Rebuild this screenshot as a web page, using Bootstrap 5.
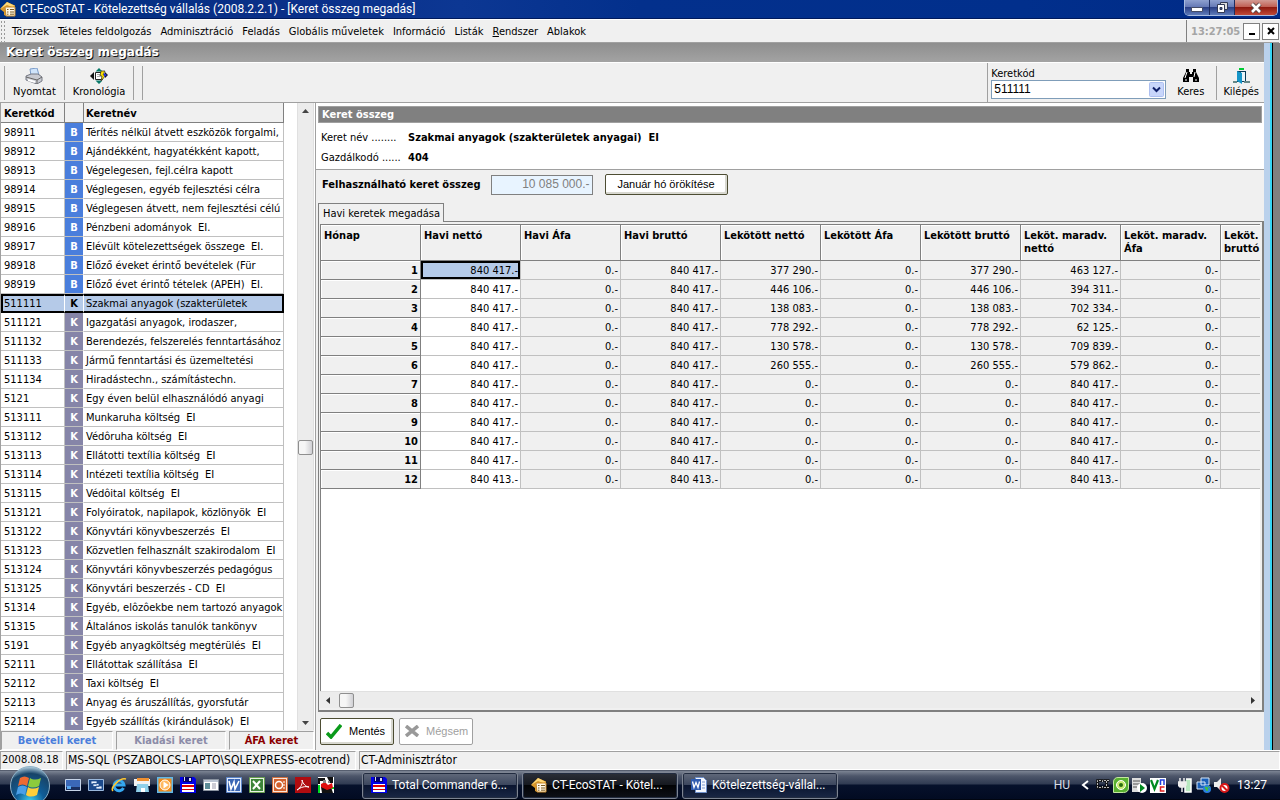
<!DOCTYPE html>
<html lang="hu">
<head>
<meta charset="utf-8">
<meta name="viewport" content="width=device-width, initial-scale=1">
<title>CT-EcoSTAT - Kötelezettség vállalás</title>
<link rel="stylesheet" href="https://cdn.jsdelivr.net/npm/bootstrap@5.3.0/dist/css/bootstrap.min.css">
<style>
:root{--face:#f0f0f0;--line:#a0a0a0;--grid:#c0c0c0;--dark:#808080;--sel:#b5cae8}
body{font:11px/13px "DejaVu Sans Condensed","DejaVu Sans",sans-serif;color:#000;background:var(--face)}
button,input,select{font:inherit;color:inherit}
a{color:inherit;text-decoration:none}
.segoe{font-family:Roboto,"Open Sans",sans-serif;font-size:12px}
.sys{font-family:"Liberation Sans",Arial,sans-serif}
/* title bar */
.titlebar{height:19px;background:linear-gradient(90deg,#003080 0,#0a2f88 22%,#0c3793 36%,#03308c 50%,#012f8c 80%,#002a86);color:#fff;border-bottom:1px solid #001a5c}
.winbtns{border:1px solid #a9bce0;border-top:0;border-radius:0 0 5px 5px;overflow:hidden;height:16px;margin-right:2px}
.winbtns button{border:0;padding:0;background:linear-gradient(#8ea0cf,#6478b5 48%,#2a3f86 50%,#5f7cba);width:25px;border-right:1px solid #1d2c60;display:flex;justify-content:center;align-items:center}
.winbtns .closer{width:42px;border:0;background:linear-gradient(#d29a93,#c05c50 48%,#8f1a10 50%,#c04a38)}
/* menu */
.menubar{height:24px;border-top:1px solid #fff;border-bottom:1px solid var(--line);margin-right:1px}
.grip{width:5px;height:22px;background:radial-gradient(circle,#999 1px,transparent 1px) 0 0/3px 4px}
.menubar nav{gap:9px;padding-left:7px}
.clock{color:#a5a5a5;font-weight:700;border-left:1px solid var(--dark);padding-left:4px;width:57px}
.mdi{width:17px;height:17px;border:1px solid var(--dark);background:#fff;padding:0;display:flex;margin-right:2px}
.mdi:last-child{margin-right:0}
/* right edge of the desktop */
.edge{width:16px;background:linear-gradient(90deg,#bad1ec 0 6px,#35d5f5 6px 8px,#000 8px 9px,#808080 9px)}
.caption-bar{height:19px;background:linear-gradient(#8e8e8e,#a3a3a3);color:#fff;font:700 12px/19px "DejaVu Sans",sans-serif;text-shadow:1px 1px 0 #111;padding-left:6px}
.toolbar{height:41px;border-bottom:1px solid var(--line);border-top:1px solid #fff}
.tool{border:0;background:none;padding:0;text-align:center;display:flex;flex-direction:column;align-items:center;justify-content:space-between;height:30px}
.tool-find{margin:0 12px 0 11px}
.tool-exit{margin:0 5px 0 6px}
.vline{width:1px;height:34px;background:var(--line)}
.combo-box{margin-left:3px}
.combo{width:175px;height:19px;border:1px solid #7f9db9;background:#fff url("data:image/svg+xml,%3Csvg xmlns='http://www.w3.org/2000/svg' width='15' height='15'%3E%3Crect x='.5' y='.5' width='14' height='14' rx='1' fill='%23c8d6fb' stroke='%23adbff0'/%3E%3Cpath d='M4 5.500l3.500 3.500 3.500-3.500' fill='none' stroke='%2310206a' stroke-width='2'/%3E%3C/svg%3E") no-repeat right 1px center;appearance:none;padding:0 2px;border-radius:0;display:block;line-height:15px;font-size:12px}
/* account list */
.side{width:315px;border-left:1px solid var(--line);border-right:1px solid #fff}
.list-wrap{overflow:hidden;background:#fff;min-height:0}
.accounts{width:283px;table-layout:fixed;border-collapse:separate;border-spacing:0}
.accounts td,.accounts th{height:19px;padding:1px 0 0 2px;white-space:nowrap;overflow:hidden;border-right:1px solid var(--grid);border-bottom:1px solid var(--grid)}
.accounts td:first-child,.accounts th:first-child{padding-left:3px}
.accounts thead th{background:var(--face);border-color:var(--dark);height:20px;line-height:15px}
.accounts .kind{color:#fff;font-weight:700;text-align:center;background:#8685a8;padding:1px 0 0;border-right-color:#fff}
.accounts .inc .kind{background:#4a7edc}
.accounts .cur td{background:var(--sel);border-top:2px solid #000;border-bottom:2px solid #000;padding-top:0;border-right-color:#fff}
.accounts .cur td:first-child{border-left:2px solid #000;padding-left:1px}
.accounts .cur td:last-child{border-right:2px solid #000}
.accounts .cur .kind{color:#000}
.scroll-v{width:17px;background:#ececec;border-left:1px solid #e0e0e0;border-right:1px solid #e0e0e0}
.scroll-v .thumb{margin-top:62px}
.thumb{width:15px;height:15px;border:1px solid #8f8f8f;border-radius:2px;background:linear-gradient(90deg,#f6f6f6 45%,#d0d0d4);padding:0;flex:none}
.arrow{border:0;background:none;padding:0;width:15px;height:15px;display:flex;align-items:center;justify-content:center}
.kinds{height:20px;padding-top:1px;gap:3px}
.kinds button{border:1px solid;border-color:var(--line) #fff #fff var(--line);background:var(--face);font-weight:700;line-height:15px;padding:0}
.kinds .k-inc{width:112px;color:#4a7edc}
.kinds .k-exp{width:110px;color:#8c8ca8}
.kinds .k-vat{color:#8b0000}
/* form panel */
.panel{border-left:1px solid var(--line);padding:0 0 0 2px}
.sect{background:var(--dark);color:#fff;font-weight:700;font-size:11px;line-height:15px;height:17px;padding:0 3px;border:1px solid var(--line);margin:3px 2px 0 0}
.info{background:#fff;height:67px;margin-left:-2px;padding:0 0 0 2px;border-bottom:1px solid var(--line)}
.info dt{width:86px;font-weight:400;padding-left:3px}
.info dl{row-gap:7px}
.amount{width:102px;height:20px;border:1px solid var(--dark);background:#e8f4ff;color:var(--dark);text-align:right;padding:0 2px 2px;border-radius:0;margin:0 12px 0 10px;font-size:12px}
.pushb{background:#fff;border:1px solid #4d4d33;border-radius:2px;box-shadow:inset -2px -2px 0 #d8d8d0;padding:0}
.pushb:disabled{border-color:var(--line);box-shadow:none;color:var(--line)}
.inherit-btn{width:123px;height:21px}
.actions{height:38px;gap:5px;padding-left:2px}
.actions .pushb{width:74px;height:27px;padding-left:5px;gap:7px}
.tabs-row button{border:1px solid var(--dark);border-bottom:0;background:var(--face);height:19px;padding:0 3px 0 4px;position:relative;margin-bottom:-1px}
.page-box{border:1px solid var(--dark);border-right-width:2px;border-bottom-width:2px;padding:2px 2px 2px 1px;min-height:0}
.grid-wrap{overflow:hidden;background:#fff;border-left:1px solid var(--dark);border-top:1px solid var(--dark);min-height:0}
.months{width:1000px;table-layout:fixed;border-collapse:separate;border-spacing:0}
.months td,.months th{height:19px;padding:1px 2px 0 3px;text-align:right;border-right:1px solid var(--grid);border-bottom:1px solid var(--grid);background:var(--face);white-space:nowrap}
.months th{border-color:var(--dark);box-shadow:inset 1px 1px 0 #fff}
.months thead th{height:36px;text-align:left;vertical-align:top;padding-top:4px;line-height:13px;white-space:normal}
.months .edit{background:#fff}
.months .edit.cur{background:var(--sel);box-shadow:inset 0 0 0 2px #000}
.scroll-h{height:17px;background:#ececec;border-top:1px solid #e0e0e0}
/* status bar */
.status{height:20px;font-size:12px;line-height:16px;border-top:1px solid #fff;gap:3px;background:var(--face)}
.status div{border:1px solid;border-color:var(--line) #fff #fff var(--line);padding-left:1px}
.status .st-date{width:63px;font-size:11px}
.status .st-db{width:290px}
/* taskbar */
.taskbar{height:30px;background:linear-gradient(#30384a 0,#7c8493 1px,#4d566a 6px,#303b52 14px,#06112b 15px,#020b22 29px,#000);color:#fff}
.taskbar .app{width:156px;height:27px;border:1px solid #7d8492;border-radius:3px;background:linear-gradient(#626a7b,#3b465d 48%,#0a1530 50%,#1a2744);color:#fff;text-align:left;padding:0 0 0 8px;display:flex;align-items:center;gap:5px;white-space:nowrap;box-shadow:inset 0 0 0 1px #222c40}
.taskbar .app.on{background:linear-gradient(#2b2f38,#15181f 48%,#020305 50%,#0d1018)}
.apps{gap:4px}
.ql{gap:7px;margin:0 28px 0 15px}
.ql button,.tray button{border:0;background:none;padding:0;display:flex}
.tray{gap:3px;padding-right:13px}
.tray .lang{margin-right:8px;color:#d8dce4}
.tray .more{margin-right:4px}
.tray .power{margin-left:9px}
.start{width:42px;height:30px;border:0;background:none;padding:0;display:flex;overflow:visible;align-items:flex-end}
</style>
</head>
<body class="vh-100 d-flex flex-column overflow-hidden">
<svg width="0" height="0" class="position-absolute" aria-hidden="true">
<symbol id="house" viewBox="0 0 16 16"><path d="M0 8L7 1l8 3.500V7H5l1 8-2-1v-3z" fill="#d9982a"/><path d="M0 8L7 1l8 4-3 1-5-2z" fill="#ffd978"/><path d="M5 6h10v9H6z" fill="#fff8e8" stroke="#c98a2a"/><path d="M7 8.500h1.500M10 8.500h4M7 11h1.500M10 11h4M7 13.200h1.500M10 13.200h4" stroke="#7a5a20"/></symbol>
<symbol id="floppy" viewBox="0 0 16 16"><path d="M0 0h14l2 2v14H0z" fill="#0000e8"/><path d="M3 0h9v5H3z" fill="#00006a"/><path d="M4 0h1v4H4zM9 1h2v3H9z" fill="#dde"/><path d="M2 7h12v8H2z" fill="#fff"/><path d="M2 8h12v2H2zM2 12h12v1H2z" fill="#e00000"/></symbol>
<symbol id="word" viewBox="0 0 16 16"><path d="M.5.5h15v15H.5z" fill="#dfe9fa" stroke="#5c85c8"/><path d="M2 2h12v12H2z" fill="#3a66b5"/><path d="M3 4l2 8 3-7 1 7 4-8" fill="none" stroke="#fff" stroke-width="1.600"/></symbol>
<symbol id="worddoc" viewBox="0 0 16 16"><path d="M4.500.5h8l3 3v12h-11z" fill="#f4f8ff" stroke="#6f90cc"/><path d="M11 5h3M11 8h3M11 11h3" stroke="#7a96cc"/><path d="M0 2h10v11H0z" fill="#2f5cb0"/><path d="M1.500 4.500l1.500 6 2-5 2 5 1.500-6" fill="none" stroke="#fff" stroke-width="1.300"/></symbol>
</svg>

<header class="titlebar d-flex align-items-center flex-shrink-0">
  <svg width="16" height="16" class="me-1"><use href="#house"/></svg>
  <span class="segoe flex-fill">CT-EcoSTAT - Kötelezettség vállalás (2008.2.2.1) - [Keret összeg megadás]</span>
  <div class="winbtns d-flex align-self-start">
    <button type="button" aria-label="Kis méret"><svg width="14" height="12"><path d="M1.500 5.500h11v4h-11z" fill="#fff" stroke="#444c66"/></svg></button>
    <button type="button" aria-label="Előző méret"><svg width="14" height="13"><path d="M5.500 1.500h7v7h-7z" fill="#ddd" stroke="#333a55"/><path d="M2.500 3.500h7v8h-7z" fill="#fff" stroke="#333a55"/><path d="M5 6.500h2v2H5z" fill="#39508e" stroke="#333a55"/></svg></button>
    <button type="button" class="closer" aria-label="Bezárás"><svg width="14" height="12"><path d="M3 2l8 8M11 2l-8 8" stroke="#544" stroke-width="4.500"/><path d="M3 2l8 8M11 2l-8 8" stroke="#fff" stroke-width="2.600"/></svg></button>
  </div>
</header>

<div class="menubar d-flex align-items-center flex-shrink-0">
  <div class="grip"></div>
  <nav class="d-flex flex-fill">
    <a href="#">Törzsek</a><a href="#">Tételes feldolgozás</a><a href="#">Adminisztráció</a><a href="#">Feladás</a><a href="#">Globális műveletek</a><a href="#">Információ</a><a href="#">Listák</a><a href="#"><u>R</u>endszer</a><a href="#">Ablakok</a>
  </nav>
  <div class="clock h-100 d-flex align-items-center">13:27:05</div>
  <button type="button" class="mdi justify-content-center align-items-end pb-1" aria-label="Kis méret"><svg width="6" height="2"><path d="M0 0h6v2H0z"/></svg></button>
  <button type="button" class="mdi justify-content-center align-items-center" aria-label="Ablak bezárása"><svg width="8" height="8"><path d="M1 1l6 6M7 1L1 7" stroke="#000" stroke-width="2"/></svg></button>
</div>

<div class="d-flex flex-fill" style="min-height:0">
<div class="d-flex flex-column flex-fill" style="min-width:0">
  <div class="caption-bar flex-shrink-0">Keret összeg megadás</div>
  <div class="toolbar d-flex align-items-center flex-shrink-0">
    <span class="vline ms-1"></span>
    <button type="button" class="tool mx-2">
      <svg width="18" height="16"><path d="M5 1l7-1 2 7-8 1z" fill="#cfe4fb" stroke="#7b9cc9"/><path d="M1 8l5-2h7l4 3v4l-5 3-11-4z" fill="#c9cbd2" stroke="#777a85"/><path d="M1 9l11 3 5-3M12 12v4" fill="none" stroke="#666"/><path d="M3 12l7 2" stroke="#fff" stroke-width="2"/></svg>
      <span>Nyomtat</span></button>
    <span class="vline"></span>
    <button type="button" class="tool mx-2">
      <svg width="18" height="16"><path d="M9 0l3.500 3.500h-7zM9 16l3.500-3.500h-7z" fill="#087868"/><path d="M0 8l4-4v8zM18 7l-3-3v6z" fill="#111"/><path d="M5.500 4.500h7v7h-7z" fill="#fff" stroke="#222"/><path d="M7 6.500h3M7 8.500h3" stroke="#aaa"/><path d="M11 3h4l-2 4h3l-5 6 1-5h-2z" fill="#ffe200" stroke="#222" stroke-width=".7"/><path d="M14 5l3 2-3 2z" fill="#2233dd"/></svg>
      <span>Kronológia</span></button>
    <span class="vline me-2"></span><span class="vline"></span>
    <span class="flex-fill"></span>
    <span class="vline h-100"></span>
    <div class="combo-box">
      <label for="kod" class="d-block">Keretkód</label>
      <select id="kod" class="combo sys"><option>511111</option></select>
    </div>
    <button type="button" class="tool tool-find">
      <svg width="16" height="15"><path d="M3 1h3v3h1v2h2V4h1V1h3v3l3 6v4h-6V9H6v5H0v-4l3-6z" fill="#000"/><path d="M4 4L2 10M12 4l-1 5M2 12h2M12 12h2" stroke="#fff"/></svg>
      <span>Keres</span></button>
    <span class="vline"></span>
    <button type="button" class="tool tool-exit">
      <svg width="17" height="16"><path d="M6 0h5v2H6z" fill="#0c3"/><path d="M4 3h9v11H4z" fill="#073a56"/><path d="M8 4h4v9H8z" fill="#e8f4fa"/><path d="M4 3l5 2v11l-5-3z" fill="#1595c8"/><path d="M0 14h4M11 14h6" stroke="#688" stroke-width="2"/></svg>
      <span>Kilépés</span></button>
  </div>

  <div class="d-flex flex-fill" style="min-height:0">
    <aside class="side d-flex flex-column flex-shrink-0">
      <div class="d-flex flex-fill list-wrap">
        <div class="flex-fill">
          <table class="accounts">
            <colgroup><col style="width:64px"><col style="width:19px"><col></colgroup>
            <thead><tr><th>Keretkód</th><th></th><th>Keretnév</th></tr></thead>
            <tbody id="accounts"></tbody>
          </table>
        </div>
        <div class="scroll-v d-flex flex-column align-items-center justify-content-between">
          <button type="button" class="arrow" aria-label="Fel"><svg width="7" height="4"><path d="M0 4l3.500-4L7 4z" fill="#444"/></svg></button>
          <button type="button" class="thumb" aria-label="Görgető"></button>
          <button type="button" class="arrow" aria-label="Le"><svg width="7" height="4"><path d="M0 0l3.500 4L7 0z" fill="#444"/></svg></button>
        </div>
      </div>
      <div class="kinds d-flex flex-shrink-0">
        <button type="button" class="k-inc">Bevételi keret</button>
        <button type="button" class="k-exp">Kiadási keret</button>
        <button type="button" class="k-vat flex-fill">ÁFA keret</button>
      </div>
    </aside>

    <main class="panel d-flex flex-column flex-fill" style="min-width:0">
      <div class="info flex-shrink-0">
        <h1 class="sect mb-0">Keret összeg</h1>
        <dl class="d-flex flex-column mb-0 pt-2">
          <div class="d-flex"><dt>Keret név ........</dt><dd class="mb-0 ms-1 fw-bold">Szakmai anyagok (szakterületek anyagai)&nbsp; EI</dd></div>
          <div class="d-flex"><dt>Gazdálkodó ......</dt><dd class="mb-0 ms-1 fw-bold">404</dd></div>
        </dl>
      </div>
      <div class="d-flex align-items-center pt-1 ps-1 flex-shrink-0">
        <label for="ossz" class="fw-bold">Felhasználható keret összeg</label>
        <input id="ossz" class="amount sys" value="10 085 000.-" disabled>
        <button type="button" class="pushb inherit-btn sys">Január hó örökítése</button>
      </div>
      <div class="tabs-row pt-2 flex-shrink-0"><button type="button">Havi keretek megadása</button></div>
      <div class="page-box d-flex flex-column flex-fill">
        <div class="grid-wrap flex-fill">
          <table class="months">
            <thead><tr><th>Hónap</th><th>Havi nettó</th><th>Havi Áfa</th><th>Havi bruttó</th><th>Lekötött nettó</th><th>Lekötött Áfa</th><th>Lekötött bruttó</th><th>Leköt. maradv. nettó</th><th>Leköt. maradv. Áfa</th><th>Leköt. maradv. bruttó</th></tr></thead>
            <tbody id="months"></tbody>
          </table>
        </div>
        <div class="scroll-h d-flex align-items-center flex-shrink-0">
          <button type="button" class="arrow me-1" aria-label="Balra"><svg width="4" height="7"><path d="M4 0L0 3.500 4 7z" fill="#333"/></svg></button>
          <button type="button" class="thumb" aria-label="Vízszintes görgető"></button>
          <button type="button" class="arrow ms-auto" aria-label="Jobbra"><svg width="4" height="7"><path d="M0 0l4 3.500L0 7z" fill="#333"/></svg></button>
        </div>
      </div>
      <div class="actions d-flex align-items-center flex-shrink-0 sys">
        <button type="button" class="pushb d-flex align-items-center"><svg width="16" height="15"><path d="M1 9l4 4L15 1" fill="none" stroke="#0a9a1a" stroke-width="3.500"/></svg>Mentés</button>
        <button type="button" class="pushb d-flex align-items-center" disabled><svg width="14" height="12"><path d="M1 1l12 10M13 1L1 11" stroke="#999" stroke-width="3.500"/></svg>Mégsem</button>
      </div>
    </main>
  </div>
</div>
<div class="edge flex-shrink-0"></div>
</div>

<footer class="status d-flex flex-shrink-0">
  <div class="st-date">2008.08.18</div><div class="st-db">MS-SQL (PSZABOLCS-LAPTO\SQLEXPRESS-ecotrend)</div><div class="flex-fill">CT-Adminisztrátor</div>
</footer>

<div class="taskbar d-flex align-items-center flex-shrink-0 segoe">
  <button type="button" class="start ms-2" aria-label="Start"><svg width="42" height="34" viewBox="0 0 42 34" style="flex:none"><defs><radialGradient id="orb" cx=".5" cy=".9" r=".9"><stop offset="0" stop-color="#3fd0f0"/><stop offset=".4" stop-color="#0f5d98"/><stop offset=".8" stop-color="#184468"/><stop offset="1" stop-color="#b8d4e4"/></radialGradient></defs><circle cx="22" cy="20" r="19.500" fill="url(#orb)" stroke="#8fb2c8"/><path d="M12 12c3-2 6-2 9 0l-2 8c-3-2-6-2-9 0z" fill="#ee6a32"/><path d="M22 12c3 2 7 2 11 0l-2 8c-4 2-8 2-11 0z" fill="#8ccb3c"/><path d="M10 21c3-2 6-2 9 0l-2 8c-3-2-6-2-9 0z" fill="#4a9fe8"/><path d="M20 21c3 2 7 2 11 0l-2 8c-4 2-8 2-11 0z" fill="#ffce3a"/></svg></button>
  <div class="ql d-flex align-items-center">
    <button type="button" aria-label="Asztal"><svg width="16" height="16"><path d="M.5 2.500h15v11H.5z" fill="#3b68b8" stroke="#c6d4e8"/><path d="M1 10h14v3H1z" fill="#1a2f60"/><path d="M2 9h4v3H2z" fill="#58a8f0"/></svg></button>
    <button type="button" aria-label="Ablakváltó"><svg width="16" height="16"><path d="M.5 2.500h15v11H.5z" fill="#1c4a8c" stroke="#9ab8dc"/><path d="M3 4h6v3H3zM5 6.500h6v3H5zM8 9h6v3H8z" fill="#e8f2ff" stroke="#1c4a8c" stroke-width=".8"/></svg></button>
    <button type="button" aria-label="Internet Explorer"><svg width="16" height="16"><path d="M12.500 11A5 5 0 1 1 13 8H4" fill="none" stroke="#35a8f0" stroke-width="3"/><path d="M2 14C-1 11 9 0 15 2" fill="none" stroke="#ffc830" stroke-width="1.600"/></svg></button>
    <button type="button" aria-label="Fotótár"><svg width="16" height="16"><path d="M0 2h16v7H0z" fill="#f2f2f2"/><path d="M3 1h12v3H3z" fill="#f09030"/><path d="M3 7h11l1 8H2z" fill="#8fd0ea"/><path d="M7 11h4v4H7z" fill="#fff"/></svg></button>
    <button type="button" aria-label="Media Player"><svg width="16" height="16"><path d="M.75.750h14.500v14.500H.75z" fill="#f08a18" stroke="#60b8e8" stroke-width="1.500"/><circle cx="8" cy="8" r="5" fill="#ffb860" stroke="#fff"/><path d="M6.500 4.500l5 3.500-5 3.500z" fill="#fff"/></svg></button>
    <button type="button" aria-label="Total Commander"><svg width="16" height="16"><use href="#floppy"/></svg></button>
    <button type="button" aria-label="Ablak"><svg width="16" height="16"><path d="M.5 2.500h15v11H.5z" fill="#fff" stroke="#8a93a0"/><path d="M1 3h14v2H1z" fill="#bcc6d4"/><path d="M2 6h5v6H2z" fill="#5c8c98"/><path d="M9 7h4M9 9h4M9 11h4" stroke="#99a"/></svg></button>
    <button type="button" aria-label="Word"><svg width="16" height="16"><use href="#word"/></svg></button>
    <button type="button" aria-label="Excel"><svg width="16" height="16"><path d="M.5.500h15v15H.5z" fill="#e8f3e2" stroke="#6aa050"/><path d="M2 2h12v12H2z" fill="#3c8438"/><path d="M4 4l7 8M11 4l-7 8" stroke="#fff" stroke-width="2"/></svg></button>
    <button type="button" aria-label="PowerPoint"><svg width="16" height="16"><path d="M.5.500h15v15H.5z" fill="#fbe6da" stroke="#d07040"/><path d="M2 2h12v12H2z" fill="#d2602c"/><circle cx="7" cy="8" r="3.500" fill="none" stroke="#fff" stroke-width="1.500"/><path d="M11 5h2M11 8h2M11 11h2" stroke="#fff"/></svg></button>
    <button type="button" aria-label="Adobe Reader"><svg width="16" height="16"><path d="M0 0h16v16H0z" fill="#b00c10"/><path d="M2 13C6 11 8 6 7 3c1 4 4 7 7 7-4-1-8 0-12 3z" fill="none" stroke="#fff"/></svg></button>
    <button type="button" aria-label="IrfanView"><svg width="16" height="16"><path d="M0 0h16v16H0z" fill="#fff"/><path d="M0 1h7v3H2v3H0zM9 0h6v6h-3zM3 10h10l2 6H4z" fill="#111"/><path d="M0 8h2v8H0zM13 10h3v2h-3z" fill="#0d2"/><path d="M3 7l4-2 3 3 4-2 1 5-6 2-6-3z" fill="#e01010"/><path d="M5 3h3v3H5zM10 4h2v2h-2z" fill="#888"/></svg></button>
  </div>
  <div class="apps d-flex">
    <button type="button" class="app"><svg width="16" height="16"><use href="#floppy"/></svg>Total Commander 6...</button>
    <button type="button" class="app on"><svg width="16" height="16"><use href="#house"/></svg>CT-EcoSTAT - Kötel...</button>
    <button type="button" class="app"><svg width="16" height="16"><use href="#worddoc"/></svg>Kötelezettség-vállal...</button>
  </div>
  <div class="tray d-flex align-items-center ms-auto">
    <span class="lang">HU</span>
    <button type="button" class="more" aria-label="Rejtett ikonok"><svg width="8" height="10"><path d="M7 1L2 5l5 4" fill="none" stroke="#fff" stroke-width="2"/></svg></button>
    <button type="button" aria-label="CT"><svg width="14" height="12"><path d="M6.500 3V1.500h-5v7h5V7M8 1.500h5.500M8 8.500h5.500M10.500 2v6" fill="none" stroke="#111" stroke-width="2.500"/><path d="M6.500 3V1.500h-5v7h5V7M8 1.500h5.500M8 8.500h5.500M10.500 2v6" fill="none" stroke="#bbb" stroke-dasharray="2 1"/></svg></button>
    <button type="button" aria-label="NOD"><svg width="16" height="16"><path d="M5 .500h10.500V11c0 3-2 4.500-5 4.500H.500V5c0-3 2-4.500 4.500-4.500z" fill="#58b030" stroke="#c4e8a0"/><circle cx="8" cy="8" r="4.500" fill="#c8e870" stroke="#fff"/><circle cx="8" cy="8" r="2" fill="#2a7010"/></svg></button>
    <button type="button" aria-label="SQL Server"><svg width="15" height="15"><path d="M0 0h9v14H0z" fill="#ddd"/><path d="M1 3h7M1 6h7M1 9h4" stroke="#555"/><circle cx="10" cy="10" r="5" fill="#fff"/><path d="M8 6l5 4-5 4z" fill="#008a20"/></svg></button>
    <button type="button" aria-label="VNC"><svg width="16" height="15"><path d="M0 0h16v15H0z" fill="#fff"/><path d="M1 2l3.500 9L8 2" fill="none" stroke="#008a20" stroke-width="2.200"/><path d="M10.500 7V2h3.500v5" fill="none" stroke="#2040e0" stroke-width="1.500"/><path d="M14.500 9h-4v4h4" fill="none" stroke="#e02020" stroke-width="1.500"/></svg></button>
    <button type="button" class="power" aria-label="Energia"><svg width="15" height="16"><path d="M8 2h5v13H7V9" fill="#b8e8c0" stroke="#fff" stroke-width="1.500"/><path d="M2 1v4M6 1v4M0 5h8v3l-2 2H2L0 8zM4 10v5" fill="#eee" stroke="#eee" stroke-width="1.500"/></svg></button>
    <button type="button" aria-label="Hálózat"><svg width="15" height="16"><path d="M5 1h8v7H5zM1 5h8v7H1z" fill="#1a5fb8" stroke="#d8e8f8"/><circle cx="11" cy="12" r="4" fill="#2a80e0"/><path d="M9 10l3 1-1 3zM12 9l2 2" fill="#40c040" stroke="#40c040"/></svg></button>
    <button type="button" aria-label="Hang"><svg width="16" height="16"><path d="M0 5h3l4-4v13l-4-4H0z" fill="#eee"/><circle cx="10.500" cy="11" r="4" fill="#fff" stroke="#d81818" stroke-width="2"/><path d="M8 8.500l5 5" stroke="#d81818" stroke-width="2"/></svg></button>
    <span class="ms-1">13:27</span>
  </div>
</div>

<script src="https://cdn.jsdelivr.net/npm/bootstrap@5.3.0/dist/js/bootstrap.bundle.min.js"></script>
<script>
const accounts = `98911|Térítés nélkül átvett eszközök forgalmi,
98912|Ajándékként, hagyatékként kapott,
98913|Végelegesen, fejl.célra kapott
98914|Véglegesen, egyéb fejlesztési célra
98915|Véglegesen átvett, nem fejlesztési célú
98916|Pénzbeni adományok  EI.
98917|Elévült kötelezettségek összege  EI.
98918|Előző éveket érintő bevételek (Für
98919|Előző évet érintő tételek (APEH)  EI.
511111|Szakmai anyagok (szakterületek
511121|Igazgatási anyagok, irodaszer,
511132|Berendezés, felszerelés fenntartásához
511133|Jármű fenntartási és üzemeltetési
511134|Hiradástechn., számítástechn.
5121|Egy éven belül elhasználódó anyagi
513111|Munkaruha költség  EI
513112|Védôruha költség  EI
513113|Ellátotti textília költség  EI
513114|Intézeti textília költség  EI
513115|Védôital költség  EI
513121|Folyóiratok, napilapok, közlönyök  EI
513122|Könyvtári könyvbeszerzés  EI
513123|Közvetlen felhasznált szakirodalom  EI
513124|Könyvtári könyvbeszerzés pedagógus
513125|Könyvtári beszerzés - CD  EI
51314|Egyéb, elôzôekbe nem tartozó anyagok
51315|Általános iskolás tanulók tankönyv
5191|Egyéb anyagköltség megtérülés  EI
52111|Ellátottak szállítása  EI
52112|Taxi költség  EI
52113|Anyag és áruszállítás, gyorsfutár
52114|Egyéb szállítás (kirándulások)  EI`.split('\n').map(r => r.split('|'));
document.getElementById('accounts').innerHTML = accounts.map(([code, name]) => {
  const income = code.startsWith('989');
  return `<tr class="${income ? 'inc' : ''}${code === '511111' ? 'cur' : ''}"><td>${code}</td><td class="kind">${income ? 'B' : 'K'}</td><td>${name.replace(/ {2}/g, '&nbsp; ')}</td></tr>`;
}).join('');
const bound = ['377 290', '446 106', '138 083', '778 292', '130 578', '260 555', '0', '0', '0', '0', '0', '0'];
const left = ['463 127', '394 311', '702 334', '62 125', '709 839', '579 862', '840 417', '840 417', '840 417', '840 417', '840 417', '840 413'];
document.getElementById('months').innerHTML = bound.map((b, i) => {
  const net = i === 11 ? '840 413' : '840 417';
  const cells = [net, '0', net, b, '0', b, left[i], '0'];
  return `<tr><th>${i + 1}</th>${cells.map((c, j) => `<td class="${j ? '' : 'edit'}${!i && !j ? ' cur' : ''}">${c}.-</td>`).join('')}<td></td></tr>`;
}).join('');
</script>
</body>
</html>
